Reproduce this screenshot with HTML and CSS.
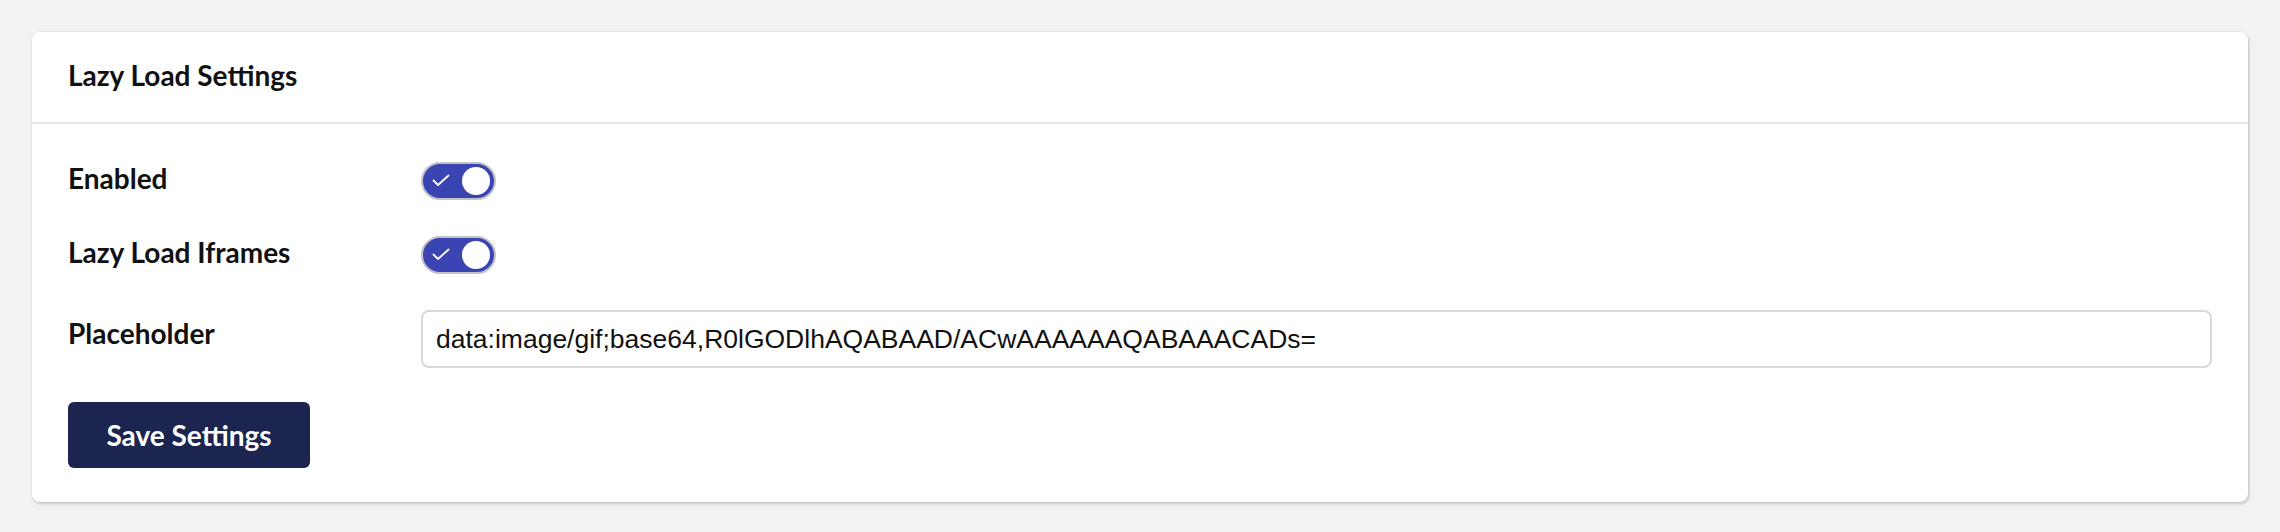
FILE: index.html
```html
<!DOCTYPE html>
<html lang="en">
<head>
<meta charset="utf-8">
<title>Lazy Load Settings</title>
<link rel="stylesheet" href="styles.css">
</head>
<body>
  <section class="card">
    <header class="card-header">
      <h2 class="card-title">Lazy Load Settings</h2>
    </header>
    <form class="card-body">
      <div class="row row-toggle">
        <label class="label">Enabled</label>
        <div class="toggle">
          <svg class="check" width="18" height="13" viewBox="0 0 18 13"><polyline points="1.5,6.5 6,11 16.5,1.5" fill="none" stroke="#fff" stroke-width="1.8" stroke-linecap="round" stroke-linejoin="round"/></svg>
          <span class="knob"></span>
        </div>
      </div>
      <div class="row row-toggle">
        <label class="label">Lazy Load Iframes</label>
        <div class="toggle">
          <svg class="check" width="18" height="13" viewBox="0 0 18 13"><polyline points="1.5,6.5 6,11 16.5,1.5" fill="none" stroke="#fff" stroke-width="1.8" stroke-linecap="round" stroke-linejoin="round"/></svg>
          <span class="knob"></span>
        </div>
      </div>
      <div class="row row-input">
        <label class="label">Placeholder</label>
        <input class="text-input" type="text" value="data:image/gif;base64,R0lGODlhAQABAAD/ACwAAAAAAQABAAACADs=">
      </div>
      <div class="actions">
        <button type="button" class="btn">Save Settings</button>
      </div>
    </form>
  </section>
</body>
</html>
```
FILE: styles.css
```css
html, body {
  margin: 0;
  padding: 0;
}
body {
  background: #f2f2f4;
  padding: 32px;
  font-family: Lato, "Noto Sans", sans-serif;
  color: #111;
}
.card {
  background: #fff;
  border-radius: 8px;
  box-shadow: 0 0 0 1px rgba(0,0,0,0.04), 1px 2px 3px rgba(0,0,0,0.18);
  height: 470px;
  box-sizing: border-box;
}
.card-header {
  height: 92px;
  box-sizing: border-box;
  padding: 27px 36px 0;
  border-bottom: 2px solid #e6e6e8;
}
.card-title {
  margin: 0;
  font-size: 28px;
  line-height: 32px;
  font-weight: 700;
}
.card-body {
  padding: 38px 36px 0;
  display: flex;
  flex-direction: column;
}
.row {
  display: flex;
  align-items: center;
}
.row-toggle {
  margin-bottom: 36px;
}
.row-input {
  margin-bottom: 34px;
}
.label {
  width: 353px;
  flex: none;
  font-size: 28px;
  line-height: 32px;
  font-weight: 700;
  margin-bottom: 6px;
}
.row-input .label {
  margin-bottom: 12px;
}
.toggle {
  width: 75px;
  height: 38px;
  box-sizing: border-box;
  border: 2px solid #c2c2c6;
  border-radius: 19px;
  background: #3a45b3;
  display: flex;
  align-items: center;
  justify-content: space-between;
  padding: 0 4px 0 9px;
}
.check {
  display: block;
  margin-top: -1px;
}
.knob {
  width: 28px;
  height: 28px;
  border-radius: 50%;
  background: #fff;
}
.text-input {
  flex: 1;
  height: 58px;
  box-sizing: border-box;
  border: 2px solid #d8d8da;
  border-radius: 8px;
  padding: 0 13px;
  font-family: "Liberation Sans", Arial, sans-serif;
  font-size: 26.5px;
  color: #111;
  background: #fff;
  outline: none;
}
.actions {
  display: flex;
}
.btn {
  width: 242px;
  height: 66px;
  border: none;
  border-radius: 6px;
  background: #1c254f;
  color: #fff;
  font-family: Lato, "Noto Sans", sans-serif;
  font-size: 28px;
  font-weight: 700;
  padding: 0;
  cursor: pointer;
}
```
